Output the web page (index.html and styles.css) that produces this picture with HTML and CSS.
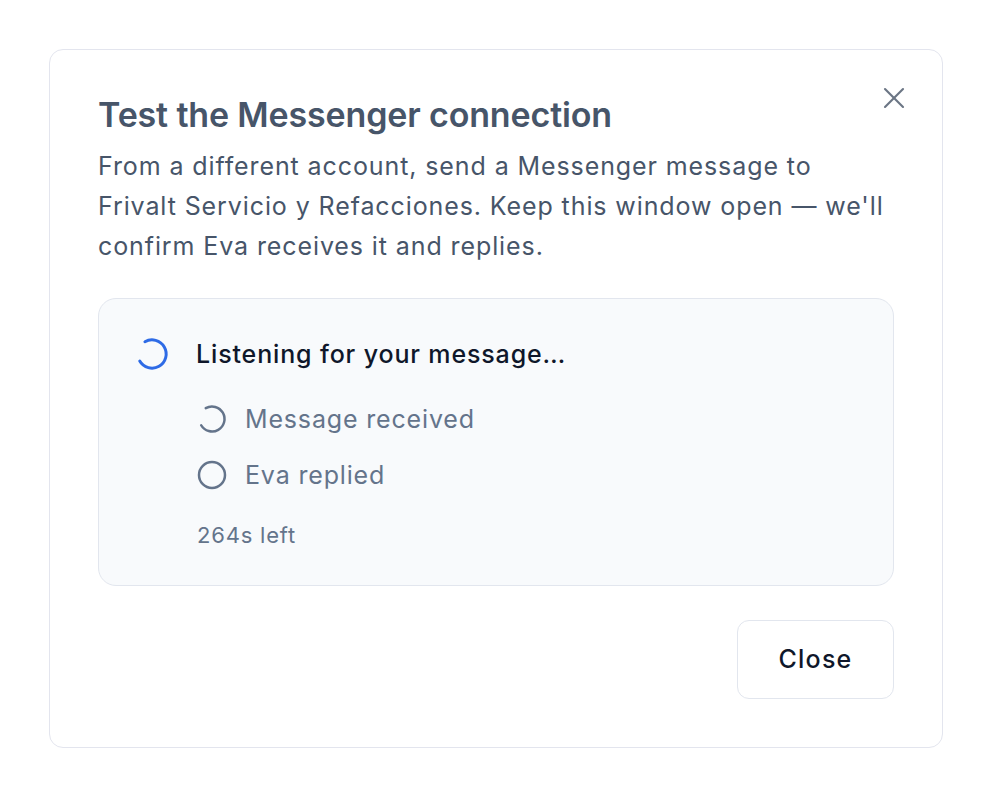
FILE: index.html
```html
<!DOCTYPE html>
<html lang="en">
<head>
<meta charset="utf-8">
<title>Test the Messenger connection</title>
<link rel="stylesheet" href="styles.css">
</head>
<body>
<div class="dialog" role="dialog" aria-labelledby="dlg-title">
  <button class="close-x" aria-label="Close">
    <svg width="36" height="36" viewBox="0 0 24 24" fill="none" stroke="currentColor" stroke-width="1.4" stroke-linecap="round" stroke-linejoin="round"><path d="M18 6 6 18"/><path d="m6 6 12 12"/></svg>
  </button>
  <h2 id="dlg-title" class="title">Test the Messenger connection</h2>
  <p class="desc">From a different account, send a Messenger message to Frivalt Servicio y Refacciones. Keep this window open — we'll confirm Eva receives it and replies.</p>

  <div class="panel">
    <div class="main-row">
      <svg class="spin-lg" width="34" height="34" viewBox="0 0 24 24" fill="none" stroke="currentColor" stroke-width="2.1" stroke-linecap="round"><path d="M7 3.34A10 10 0 1 1 3.34 17"/></svg>
      <span class="main-label">Listening for your message…</span>
    </div>
    <ul class="steps">
      <li class="step">
        <svg class="step-icon" width="30" height="30" viewBox="0 0 24 24" fill="none" stroke="currentColor" stroke-width="2" stroke-linecap="round"><path d="M7 3.34A10 10 0 1 1 3.34 17"/></svg>
        <span>Message received</span>
      </li>
      <li class="step">
        <svg class="step-icon" width="30" height="30" viewBox="0 0 24 24" fill="none" stroke="currentColor" stroke-width="2"><circle cx="12" cy="12" r="10.4"/></svg>
        <span>Eva replied</span>
      </li>
    </ul>
    <div class="timer">264s left</div>
  </div>

  <div class="footer">
    <button class="btn">Close</button>
  </div>
</div>
</body>
</html>
```

FILE: styles.css
```css
* { box-sizing: border-box; }

html, body {
  margin: 0;
  padding: 0;
  background: #ffffff;
}

body {
  min-height: 100vh;
  display: flex;
  align-items: center;
  justify-content: center;
  font-family: Inter, "Liberation Sans", sans-serif;
}

.dialog {
  position: relative;
  width: 894px;
  background: #ffffff;
  border: 1.5px solid #e3e5ee;
  border-radius: 14px;
  padding: 48px;
}

.close-x {
  position: absolute;
  top: 30px;
  right: 30px;
  width: 36px;
  height: 36px;
  padding: 0;
  border: 0;
  background: transparent;
  color: #6b7584;
  display: flex;
  align-items: center;
  justify-content: center;
  cursor: pointer;
}

.title {
  margin: 0;
  font-size: 34px;
  line-height: 34px;
  font-weight: 600;
  color: #475569;
  letter-spacing: -0.15px;
}

.desc {
  margin: 14px 0 0 0;
  font-size: 25px;
  line-height: 40px;
  letter-spacing: 0.9px;
  color: #475569;
  max-width: 790px;
}

.panel {
  margin-top: 32px;
  background: #f8fafc;
  border: 1.5px solid #e2e6ee;
  border-radius: 18px;
  padding: 36px 36px 35px 36px;
}

.main-row {
  display: flex;
  align-items: center;
  gap: 27px;
  height: 38px;
}

.spin-lg {
  color: #2e6be6;
  flex: none;
}

.main-label {
  font-size: 25px;
  line-height: 36px;
  letter-spacing: 0.86px;
  font-weight: 500;
  color: #0f172a;
}

.steps {
  list-style: none;
  margin: 28px 0 0 0;
  padding: 0 0 0 62px;
  display: flex;
  flex-direction: column;
  gap: 20px;
}

.step {
  display: flex;
  align-items: center;
  gap: 18px;
  height: 36px;
  font-size: 25px;
  line-height: 36px;
  letter-spacing: 0.84px;
  color: #64748b;
}

.step-icon {
  flex: none;
  color: #64748b;
}

.timer {
  margin: 27px 0 0 62px;
  font-size: 22px;
  line-height: 30px;
  letter-spacing: 0.8px;
  color: #64748b;
}

.footer {
  margin-top: 34px;
  display: flex;
  justify-content: flex-end;
}

.btn {
  width: 157px;
  height: 79px;
  background: #ffffff;
  border: 1.5px solid #e2e6ee;
  border-radius: 12px;
  font-family: inherit;
  font-size: 25px;
  letter-spacing: 1.2px;
  font-weight: 500;
  color: #0f172a;
  cursor: pointer;
}
```
